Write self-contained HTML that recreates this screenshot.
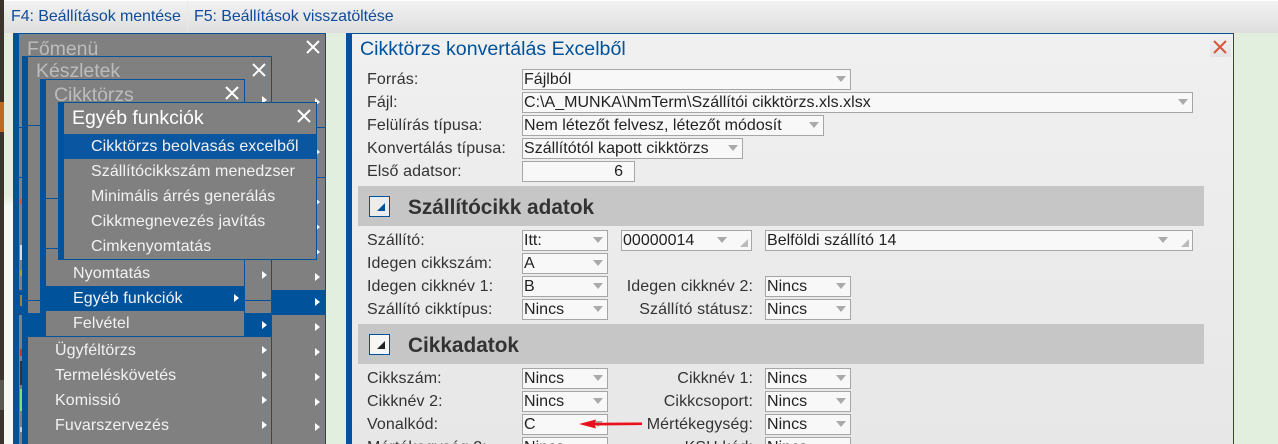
<!DOCTYPE html>
<html><head><meta charset="utf-8"><style>
html{margin:0;padding:0;width:1278px;height:444px;overflow:hidden}
body{margin:0;padding:0;width:1278px;height:444px;overflow:hidden;position:relative;background:#e3efde;font-family:"Liberation Sans",Arial,sans-serif;font-size:16px;color:#333}
.b{position:absolute}
.t{position:absolute;white-space:nowrap;line-height:20px}
.m{color:#f2f2f2;font-size:16px;letter-spacing:.08px;margin-top:1px}
.h{font-size:19.5px;line-height:22px;color:#bcbcbc;letter-spacing:-.05px}
.top{color:#0f4c9a;font-size:16px;letter-spacing:-.08px}
.ar{position:absolute;width:0;height:0;border-left:5px solid #fff;border-top:4px solid transparent;border-bottom:4px solid transparent}
.l{color:#333;font-size:16px;letter-spacing:.1px;margin-top:2px}
.r{text-align:right;width:200px;left:553px}
.i{position:absolute;box-sizing:border-box;height:21px;border:1px solid #a6a6a6;background:#f8f8f8;color:#222;line-height:20px;padding-left:1px;white-space:nowrap;font-size:16px;letter-spacing:.02px;overflow:hidden}
.i i{position:absolute;right:4px;top:6px;width:0;height:0;border-top:6px solid #aaa;border-left:5.5px solid transparent;border-right:5.5px solid transparent}
.i.c i{right:24px}
.i u{position:absolute;right:3px;top:8px;width:0;height:0;border-bottom:8px solid #bbb;border-left:8px solid transparent}
.s{position:absolute;left:358px;width:846px;height:40px;background:#c6c6c6}
.s div{position:absolute;left:11px;top:10px;box-sizing:border-box;width:21px;height:21px;border:1px solid #00529b;background:#ececec}
.s div b{position:absolute;left:7px;top:6px;width:0;height:0;border-bottom:8px solid #00529b;border-left:8px solid transparent}
.s span{position:absolute;left:50px;top:10px;font:bold 20.8px/24px "Liberation Sans",sans-serif;color:#333;white-space:nowrap}
</style></head><body>
<!-- left edge -->
<div class="b" style="left:0;top:0;width:4px;height:444px;background:#3a342c"></div>
<div class="b" style="left:0;top:102px;width:4px;height:30px;background:#c06a20"></div>
<div class="b" style="left:0;top:380px;width:4px;height:30px;background:#5a5650"></div>
<div class="b" style="left:4px;top:33px;width:9px;height:411px;background:linear-gradient(172deg,#e3efde 0,#e3efde 40%,#f6f8f3 42%,#f6f8f3 100%)"></div>
<!-- top bar -->
<div class="b" style="left:4px;top:0;width:1274px;height:33px;background:linear-gradient(#f2f2f2,#dedede);border-top:1px solid #fff;box-sizing:border-box"></div>
<div class="b" style="left:187px;top:1px;width:1px;height:32px;background:#e8e8e8"></div>
<div class="t top" style="left:11px;top:7px">F4: Beállítások mentése</div>
<div class="t top" style="left:194px;top:7px">F5: Beállítások visszatöltése</div>

<!-- Főmenü -->
<div class="b" style="left:13px;top:33px;width:313px;height:411px;background:#808080;box-sizing:border-box;border-top:1px solid #00529b;border-right:1px solid #00529b;border-left:6px solid #00529b"></div>
<div class="b" style="left:19px;top:127px;width:306px;height:1px;background:#00529b"></div>
<div class="b" style="left:19px;top:177px;width:306px;height:1px;background:#00529b"></div>
<div class="b" style="left:19px;top:290px;width:306px;height:25px;background:#00529b"></div>
<div class="t h" style="left:27px;top:38px">Főmenü</div>
<div class="ar" style="left:315px;top:98px"></div><div class="ar" style="left:315px;top:148px"></div><div class="ar" style="left:315px;top:198px"></div><div class="ar" style="left:315px;top:223px"></div><div class="ar" style="left:315px;top:248px"></div><div class="ar" style="left:315px;top:273px"></div><div class="ar" style="left:315px;top:298px"></div><div class="ar" style="left:315px;top:323px"></div><div class="ar" style="left:315px;top:348px"></div><div class="ar" style="left:315px;top:373px"></div><div class="ar" style="left:315px;top:398px"></div><div class="ar" style="left:315px;top:423px"></div>
<!-- icon specks -->
<div class="b" style="left:20px;top:199px;width:2px;height:5px;background:#e0502a"></div>
<div class="b" style="left:20px;top:245px;width:2px;height:15px;background:#ddd"></div>
<div class="b" style="left:20px;top:270px;width:2px;height:6px;background:#b0a030"></div>
<div class="b" style="left:20px;top:295px;width:2px;height:11px;background:#a08040"></div>
<div class="b" style="left:20px;top:349px;width:2px;height:7px;background:#d03020"></div>
<div class="b" style="left:20px;top:361px;width:2px;height:24px;background:#333"></div>
<div class="b" style="left:20px;top:389px;width:2px;height:22px;background:#80e070"></div>
<div class="b" style="left:20px;top:427px;width:2px;height:5px;background:#ccc"></div>
<svg class="b" style="left:306px;top:40px" width="14" height="14"><path d="M1 1L13 13M13 1L1 13" stroke="#fff" stroke-width="2"/></svg>

<!-- Készletek -->
<div class="b" style="left:22px;top:56px;width:250px;height:388px;background:#808080;box-sizing:border-box;border-top:1px solid #00529b;border-right:1px solid #00529b;border-left:6px solid #00529b"></div>
<div class="b" style="left:28px;top:125px;width:243px;height:1px;background:#00529b"></div>
<div class="b" style="left:28px;top:300px;width:243px;height:1px;background:#00529b"></div>
<div class="b" style="left:28px;top:313px;width:243px;height:24px;background:#00529b"></div>
<div class="t h" style="left:36px;top:60px">Készletek</div>
<svg class="b" style="left:252px;top:63px" width="14" height="14"><path d="M1 1L13 13M13 1L1 13" stroke="#fff" stroke-width="2"/></svg>
<div class="ar" style="left:262px;top:96px"></div><div class="ar" style="left:262px;top:271px"></div><div class="ar" style="left:262px;top:321px"></div><div class="ar" style="left:262px;top:346px"></div><div class="ar" style="left:262px;top:371px"></div><div class="ar" style="left:262px;top:396px"></div><div class="ar" style="left:262px;top:421px"></div>
<div class="t m" style="left:55px;top:340px">Ügyféltörzs</div>
<div class="t m" style="left:55px;top:365px">Termeléskövetés</div>
<div class="t m" style="left:55px;top:390px">Komissió</div>
<div class="t m" style="left:55px;top:415px">Fuvarszervezés</div>

<!-- Cikktörzs -->
<div class="b" style="left:40px;top:79px;width:205px;height:258px;background:#808080;box-sizing:border-box;border-top:1px solid #00529b;border-right:1px solid #00529b;border-left:6px solid #00529b;border-bottom:1px solid #00529b"></div>
<div class="b" style="left:46px;top:198px;width:198px;height:1px;background:#00529b"></div>
<div class="b" style="left:46px;top:248px;width:198px;height:1px;background:#00529b"></div>
<div class="b" style="left:46px;top:286px;width:198px;height:25px;background:#00529b"></div>
<div class="t h" style="left:54px;top:84px">Cikktörzs</div>
<svg class="b" style="left:225px;top:86px" width="14" height="14"><path d="M1 1L13 13M13 1L1 13" stroke="#fff" stroke-width="2"/></svg>
<div class="t m" style="left:73px;top:263px">Nyomtatás</div>
<div class="t m" style="left:73px;top:288px">Egyéb funkciók</div>
<div class="t m" style="left:73px;top:313px">Felvétel</div>
<div class="ar" style="left:234px;top:294px"></div>

<!-- Egyéb funkciók -->
<div class="b" style="left:58px;top:102px;width:259px;height:158px;background:#808080;box-sizing:border-box;border:1px solid #00529b;border-left:6px solid #00529b"></div>
<div class="b" style="left:64px;top:134px;width:252px;height:25px;background:#0b56a0"></div>
<div class="t h" style="left:72px;top:107px;color:#fff">Egyéb funkciók</div>
<svg class="b" style="left:297px;top:109px" width="14" height="14"><path d="M1 1L13 13M13 1L1 13" stroke="#fff" stroke-width="2"/></svg>
<div class="t m" style="left:91px;top:136px">Cikktörzs beolvasás excelből</div>
<div class="t m" style="left:91px;top:161px">Szállítócikkszám menedzser</div>
<div class="t m" style="left:91px;top:186px">Minimális árrés generálás</div>
<div class="t m" style="left:91px;top:211px">Cikkmegnevezés javítás</div>
<div class="t m" style="left:91px;top:236px">Cimkenyomtatás</div>

<!-- Right panel -->
<div class="b" style="left:346px;top:33px;width:888px;height:411px;box-sizing:border-box;background:linear-gradient(#f0f0f0,#e7e7e7);border-top:1px solid #00529b;border-right:1px solid #00529b;border-left:6px solid #00529b"></div>
<div class="t" style="left:360px;top:38px;font-size:19.6px;line-height:22px;color:#00529b">Cikktörzs konvertálás Excelből</div>
<div class="b" style="left:1210px;top:36px;width:21px;height:21px;background:linear-gradient(#f0f0f0,#e4e4e4)"></div>
<svg class="b" style="left:1213px;top:40px" width="14" height="14"><path d="M1 1L13 13M13 1L1 13" stroke="#d9543a" stroke-width="2"/></svg>

<div class="t l" style="left:367px;top:68px">Forrás:</div>
<div class="i" style="left:522px;top:69px;width:329px">Fájlból<i></i></div>
<div class="t l" style="left:367px;top:91px">Fájl:</div>
<div class="i" style="left:522px;top:92px;width:671px">C:\A_MUNKA\NmTerm\Szállítói cikktörzs.xls.xlsx<i></i></div>
<div class="t l" style="left:367px;top:114px">Felülírás típusa:</div>
<div class="i" style="left:522px;top:115px;width:302px">Nem létezőt felvesz, létezőt módosít<i></i></div>
<div class="t l" style="left:367px;top:137px">Konvertálás típusa:</div>
<div class="i" style="left:522px;top:138px;width:221px">Szállítótól kapott cikktörzs<i></i></div>
<div class="t l" style="left:367px;top:160px">Első adatsor:</div>
<div class="i" style="left:522px;top:161px;width:113px;text-align:right;padding-right:11px">6</div>

<div class="s" style="top:186px"><div><b></b></div><span>Szállítócikk adatok</span></div>

<div class="t l" style="left:367px;top:229px">Szállító:</div>
<div class="i" style="left:522px;top:230px;width:86px">Itt:<i></i></div>
<div class="i c" style="left:621px;top:230px;width:131px">00000014<i></i><u></u></div>
<div class="i c" style="left:765px;top:230px;width:428px">Belföldi szállító 14<i></i><u></u></div>
<div class="t l" style="left:367px;top:252px">Idegen cikkszám:</div>
<div class="i" style="left:522px;top:253px;width:86px">A<i></i></div>
<div class="t l" style="left:367px;top:275px">Idegen cikknév 1:</div>
<div class="i" style="left:522px;top:276px;width:86px">B<i></i></div>
<div class="t l r" style="top:275px">Idegen cikknév 2:</div>
<div class="i" style="left:765px;top:276px;width:86px">Nincs<i></i></div>
<div class="t l" style="left:367px;top:298px">Szállító cikktípus:</div>
<div class="i" style="left:522px;top:299px;width:86px">Nincs<i></i></div>
<div class="t l r" style="top:298px">Szállító státusz:</div>
<div class="i" style="left:765px;top:299px;width:86px">Nincs<i></i></div>

<div class="s" style="top:324px"><div style="background:#f6f6f6"><b style="border-bottom-color:#222"></b></div><span>Cikkadatok</span></div>

<div class="t l" style="left:367px;top:367px">Cikkszám:</div>
<div class="i" style="left:522px;top:368px;width:86px">Nincs<i></i></div>
<div class="t l r" style="top:367px">Cikknév 1:</div>
<div class="i" style="left:765px;top:368px;width:86px">Nincs<i></i></div>
<div class="t l" style="left:367px;top:390px">Cikknév 2:</div>
<div class="i" style="left:522px;top:391px;width:86px">Nincs<i></i></div>
<div class="t l r" style="top:390px">Cikkcsoport:</div>
<div class="i" style="left:765px;top:391px;width:86px">Nincs<i></i></div>
<div class="t l" style="left:367px;top:413px">Vonalkód:</div>
<div class="i" style="left:522px;top:414px;width:86px">C<i></i></div>
<div class="t l r" style="top:413px">Mértékegység:</div>
<div class="i" style="left:765px;top:414px;width:86px">Nincs<i></i></div>
<div class="t l" style="left:367px;top:436px">Mértékegység 2:</div>
<div class="i" style="left:522px;top:437px;width:86px">Nincs<i></i></div>
<div class="t l r" style="top:436px">KSH kód:</div>
<div class="i" style="left:765px;top:437px;width:86px">Nincs<i></i></div>

<svg class="b" style="left:578px;top:418px" width="65" height="12"><path d="M64 4.5L17 4.7L18 1.5L1 6L18 10.5L17 7.5L64 7Z" fill="#e8101a"/></svg>
</body></html>
